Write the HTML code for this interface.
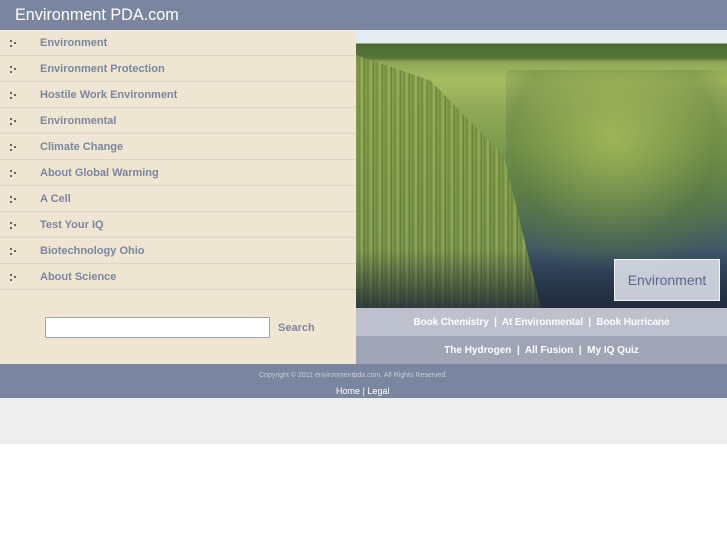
<!DOCTYPE html>
<html><head><style>
body{margin:0;width:727px;height:545px;background:#fff;font-family:"Liberation Sans",sans-serif;position:relative;overflow:hidden}
.hdr{position:absolute;left:0;top:0;width:727px;height:30px;background:#7a86a0}
.hdr span{position:absolute;left:15px;top:6px;color:#fff;font-size:16.2px}
.left{position:absolute;left:0;top:30px;width:356px;height:334px;background:#eee5d3}
.item{height:25px;border-bottom:1px solid #ddd5c3;position:relative}
.item b{position:absolute;left:40px;top:7px;font-size:11px;color:#7a86a0}
.item i{position:absolute;left:10px;top:10px;width:2px;height:2px;background:#666;box-shadow:0 5px 0 #666,4px 2px 0 #666}
.inp{position:absolute;left:45px;top:317px;width:223px;height:19px;border:1px solid #9aa;background:#fff}
.srch{position:absolute;left:278px;top:322px;font-size:11px;font-weight:bold;color:#7a86a0}
.img{position:absolute;left:356px;top:30px;width:371px;height:278px;overflow:hidden;
background:linear-gradient(180deg,#e4ecf0 0,#e4ecf0 13px,#4a6a30 14px,#55753a 28px,#8ea858 32px,#a8bc60 50px,#90a858 80px,#7a9a4c 120px,#5a7a50 170px,#3a5068 230px,#2c3a55 278px)}
.lil{position:absolute;left:150px;top:40px;width:240px;height:200px;background:radial-gradient(ellipse at 45% 35%,rgba(170,190,90,.7),rgba(90,120,60,.4) 55%,rgba(60,80,110,0) 75%)}
.reeds{position:absolute;left:0;top:25px;width:185px;height:253px;background:repeating-linear-gradient(90deg,#8aa050 0,#6e8a3c 3px,#9ab25a 6px,#5a7432 9px);opacity:.9;clip-path:polygon(0 0,40% 10%,80% 40%,100% 100%,0 100%)}
.rbot{position:absolute;left:0;top:220px;width:371px;height:58px;background:linear-gradient(180deg,rgba(40,50,40,0),rgba(30,40,55,.8))}
.lab{position:absolute;left:614px;top:259px;width:104px;height:40px;background:rgba(228,230,238,.85);border:1px solid #f4f4f4;color:#5a6690;font-size:14px;text-align:center;line-height:40px}
.n1{position:absolute;left:356px;top:308px;width:371px;height:28px;background:#bcc1cd;color:#fff;font-size:10px;font-weight:bold;text-align:center;line-height:30px;letter-spacing:-0.1px}
.n2{position:absolute;left:356px;top:336px;width:371px;height:28px;background:#a0a5b5;color:#fff;font-size:10px;font-weight:bold;text-align:center;line-height:30px}
.ft{position:absolute;left:0;top:364px;width:727px;height:34px;background:#7a86a0}
.ft .c{position:absolute;left:259px;top:8px;font-size:7px;color:#c8cdd8}
.ft .h{position:absolute;left:336px;top:22px;font-size:9px;color:#fff}
.gr{position:absolute;left:0;top:398px;width:727px;height:46px;background:#eeeeee}
</style></head><body>
<div class="hdr"><span>Environment PDA.com</span></div>
<div class="left">
<div class="item"><i></i><b>Environment</b></div>
<div class="item"><i></i><b>Environment Protection</b></div>
<div class="item"><i></i><b>Hostile Work Environment</b></div>
<div class="item"><i></i><b>Environmental</b></div>
<div class="item"><i></i><b>Climate Change</b></div>
<div class="item"><i></i><b>About Global Warming</b></div>
<div class="item"><i></i><b>A Cell</b></div>
<div class="item"><i></i><b>Test Your IQ</b></div>
<div class="item"><i></i><b>Biotechnology Ohio</b></div>
<div class="item"><i></i><b>About Science</b></div>
</div>
<div class="inp"></div><div class="srch">Search</div>
<div class="img"><div class="lil"></div><div class="reeds"></div><div class="rbot"></div></div>
<div class="lab">Environment</div>
<div class="n1">Book Chemistry &nbsp;|&nbsp; At Environmental &nbsp;|&nbsp; Book Hurricane</div>
<div class="n2">The Hydrogen &nbsp;|&nbsp; All Fusion &nbsp;|&nbsp; My IQ Quiz</div>
<div class="ft"><span class="c">Copyright © 2011 environmentpda.com. All Rights Reserved.</span><span class="h">Home | Legal</span></div>
<div class="gr"></div>
</body></html>
